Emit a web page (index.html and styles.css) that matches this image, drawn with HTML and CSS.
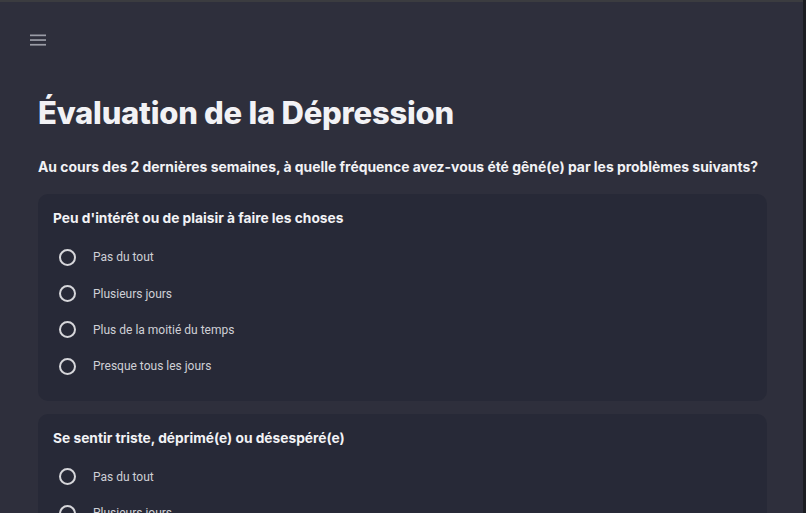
FILE: index.html
```html
<!DOCTYPE html>
<html lang="fr">
<head>
<meta charset="utf-8">
<title>Évaluation de la Dépression</title>
<link rel="stylesheet" href="styles.css">
</head>
<body>
<div class="window">
  <header class="topbar">
    <button class="menu-btn" aria-label="Menu">
      <svg width="16" height="12" viewBox="0 0 16 12"><rect x="0" y="0.5" width="16" height="1.7" fill="#9a9ca6"/><rect x="0" y="5.2" width="16" height="1.7" fill="#9a9ca6"/><rect x="0" y="9.9" width="16" height="1.7" fill="#9a9ca6"/></svg>
    </button>
  </header>
  <main class="content">
    <h1 class="title">Évaluation de la Dépression</h1>
    <p class="intro">Au cours des 2 dernières semaines, à quelle fréquence avez-vous été gêné(e) par les problèmes suivants?</p>

    <section class="card">
      <h2 class="question">Peu d'intérêt ou de plaisir à faire les choses</h2>
      <ul class="options">
        <li class="option"><span class="radio"></span><span class="label">Pas du tout</span></li>
        <li class="option"><span class="radio"></span><span class="label">Plusieurs jours</span></li>
        <li class="option"><span class="radio"></span><span class="label">Plus de la moitié du temps</span></li>
        <li class="option"><span class="radio"></span><span class="label">Presque tous les jours</span></li>
      </ul>
    </section>

    <section class="card">
      <h2 class="question">Se sentir triste, déprimé(e) ou désespéré(e)</h2>
      <ul class="options">
        <li class="option"><span class="radio"></span><span class="label">Pas du tout</span></li>
        <li class="option"><span class="radio"></span><span class="label">Plusieurs jours</span></li>
        <li class="option"><span class="radio"></span><span class="label">Plus de la moitié du temps</span></li>
        <li class="option"><span class="radio"></span><span class="label">Presque tous les jours</span></li>
      </ul>
    </section>
  </main>
</div>
</body>
</html>
```

FILE: styles.css
```css
html, body {
  margin: 0;
  padding: 0;
  background: #1c1d22;
  overflow: hidden;
}
.window {
  width: 803px;
  height: 511px;
  background: #2e2f3c;
  border-top: 2px solid #3b3c40;
  overflow: hidden;
  box-sizing: content-box;
}
.topbar {
  display: flex;
  align-items: center;
  padding: 31px 0 0 30px;
  height: 13px;
}
.menu-btn {
  background: none;
  border: 0;
  padding: 0;
  display: flex;
  width: 16px;
  height: 12px;
}
.content {
  padding: 0 36px 0 38px;
}
.title {
  font-family: "Inter", "Liberation Sans", sans-serif;
  font-weight: 800;
  font-size: 31px;
  line-height: 36px;
  color: #f2f2f5;
  margin: 49px 0 0;
  letter-spacing: -0.25px;
}
.intro {
  font-family: "Inter", "Liberation Sans", sans-serif;
  font-weight: 700;
  font-size: 13.9px;
  line-height: 20px;
  color: #f2f2f5;
  margin: 26px 0 0;
}
.card {
  background: #272937;
  border-radius: 10px;
  padding: 13px 15px 16px;
  margin-top: 17px;
}
.card + .card {
  margin-top: 13px;
}
.question {
  font-family: "Inter", "Liberation Sans", sans-serif;
  font-weight: 700;
  font-size: 13.75px;
  line-height: 22px;
  color: #f2f2f5;
  margin: 0 0 10px;
}
.options {
  list-style: none;
  margin: 0;
  padding: 0;
}
.option {
  display: flex;
  align-items: center;
  height: 36.4px;
  padding-left: 6px;
}
.radio {
  width: 13px;
  height: 13px;
  border: 2px solid #d6d6da;
  border-radius: 50%;
  flex: none;
}
.label {
  font-family: "Roboto", "Liberation Sans", sans-serif;
  font-size: 12px;
  color: #cfd0d6;
  margin-left: 17px;
}
```
